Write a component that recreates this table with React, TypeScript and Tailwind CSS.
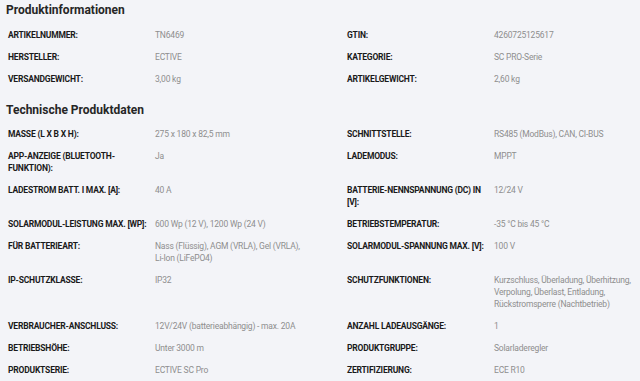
import React from "react";

type Row = { l: React.ReactNode; v: React.ReactNode; l2: React.ReactNode; v2: React.ReactNode };

const info: Row[] = [
  { l: "Artikelnummer:", v: "TN6469", l2: "GTIN:", v2: "4260725125617" },
  { l: "Hersteller:", v: "ECTIVE", l2: "Kategorie:", v2: "SC PRO-Serie" },
  { l: "Versandgewicht:", v: "3,00 kg", l2: "Artikelgewicht:", v2: "2,60 kg" },
];

const tech: Row[] = [
  { l: "Masse (L x B x H):", v: "275 x 180 x 82,5 mm", l2: "Schnittstelle:", v2: "RS485 (ModBus), CAN, CI-BUS" },
  {
    l: (
      <>
        App-Anzeige (Bluetooth-
        <br />
        Funktion):
      </>
    ),
    v: "Ja",
    l2: "Lademodus:",
    v2: "MPPT",
  },
  {
    l: "Ladestrom Batt. I max. [A]:",
    v: "40 A",
    l2: (
      <>
        Batterie-Nennspannung (DC) in
        <br />
        [V]:
      </>
    ),
    v2: "12/24 V",
  },
  {
    l: "Solarmodul-Leistung max. [Wp]:",
    v: "600 Wp (12 V), 1200 Wp (24 V)",
    l2: "Betriebstemperatur:",
    v2: "-35 °C bis 45 °C",
  },
  {
    l: "Für Batterieart:",
    v: (
      <>
        Nass (Flüssig), AGM (VRLA), Gel (VRLA),
        <br />
        Li-Ion (LiFePO4)
      </>
    ),
    l2: "Solarmodul-Spannung max. [V]:",
    v2: "100 V",
  },
  {
    l: "IP-Schutzklasse:",
    v: "IP32",
    l2: "Schutzfunktionen:",
    v2: (
      <>
        Kurzschluss, Überladung, Überhitzung,
        <br />
        Verpolung, Überlast, Entladung,
        <br />
        Rückstromsperre (Nachtbetrieb)
      </>
    ),
  },
  {
    l: "Verbraucher-Anschluss:",
    v: "12V/24V (batterieabhängig) - max. 20A",
    l2: "Anzahl Ladeausgänge:",
    v2: "1",
  },
  { l: "Betriebshöhe:", v: "Unter 3000 m", l2: "Produktgruppe:", v2: "Solarladeregler" },
  { l: "Produktserie:", v: "ECTIVE SC Pro", l2: "Zertifizierung:", v2: "ECE R10" },
];

function Cell({ l, v }: { l: React.ReactNode; v: React.ReactNode }) {
  return (
    <div className="grid grid-cols-[147px_1fr] py-[5px] leading-[12px]">
      <div className="text-[8.5px] tracking-[-0.2px] font-bold uppercase text-[#1a1a1a] whitespace-nowrap">{l}</div>
      <div className="text-[8.5px] tracking-[-0.2px] text-[#8e8e8e] whitespace-nowrap">{v}</div>
    </div>
  );
}

function Table({ rows }: { rows: Row[] }) {
  return (
    <div className="grid grid-cols-[339px_1fr] pl-[8px]">
      {rows.map((r, i) => (
        <React.Fragment key={i}>
          <Cell l={r.l} v={r.v} />
          <Cell l={r.l2} v={r.v2} />
        </React.Fragment>
      ))}
    </div>
  );
}

export default function App() {
  return (
    <div
      className="w-[640px] h-[381px] overflow-hidden bg-[#f3f4f8]"
      style={{ fontFamily: "Roboto, 'Noto Sans', sans-serif" }}
    >
      <h2 className="px-[6px] pt-[2px] mb-[6px] text-[12px] leading-[16px] font-bold text-[#262626]">
        Produktinformationen
      </h2>
      <Table rows={info} />
      <h2 className="px-[6px] mt-[12px] mb-[5px] text-[12px] leading-[16px] font-bold text-[#262626]">
        Technische Produktdaten
      </h2>
      <Table rows={tech} />
    </div>
  );
}
